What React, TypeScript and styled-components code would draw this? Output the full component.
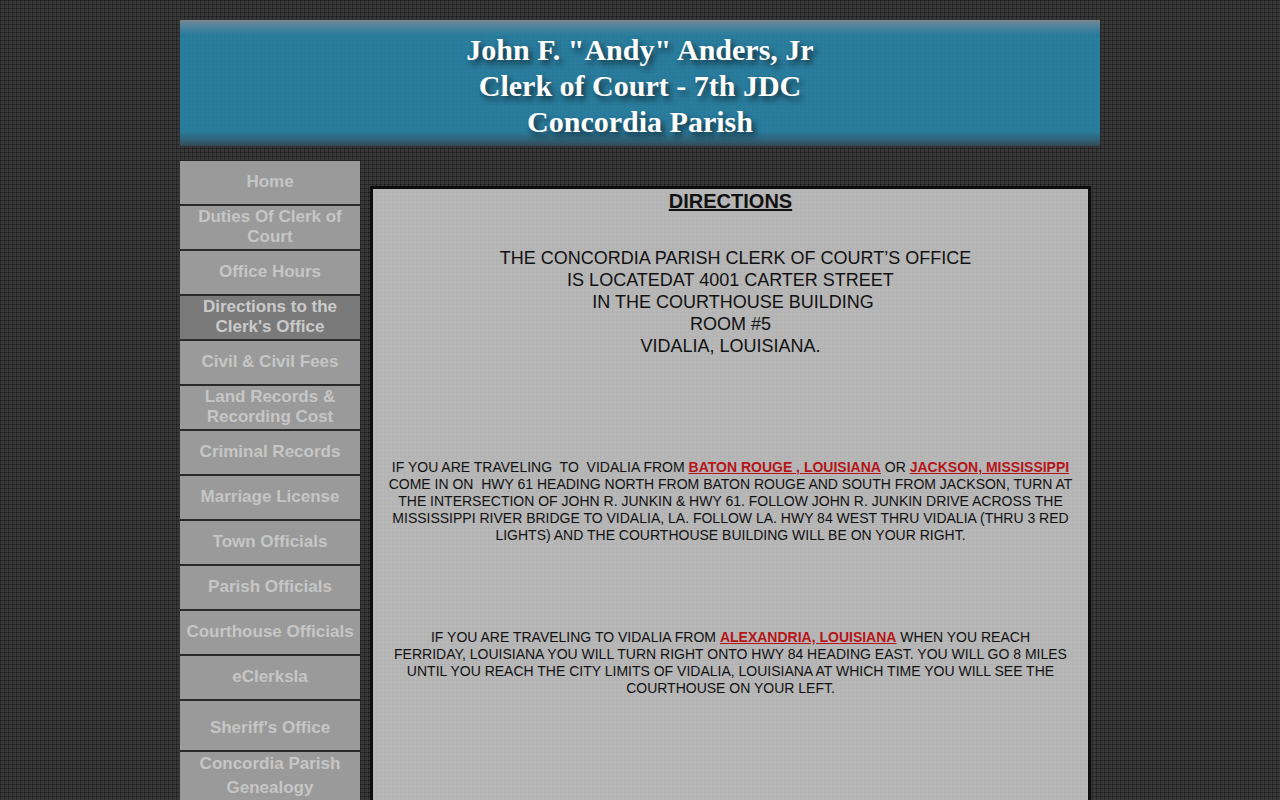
import React from "react";
import styled, { createGlobalStyle } from "styled-components";

const GlobalStyle = createGlobalStyle`
  html {
    scrollbar-width: none;
  }
  body {
    margin: 0;
    background-color: #383838;
    background-image:
      linear-gradient(to right, rgba(0, 0, 0, 0.28) 1px, transparent 1px),
      linear-gradient(to bottom, rgba(0, 0, 0, 0.28) 1px, transparent 1px);
    background-size: 4px 4px;
    font-family: "Liberation Sans", Arial, sans-serif;
  }
`;

const Page = styled.div`
  max-width: 920px;
  margin: 0 auto;
  padding: 20px 0;
`;

const Banner = styled.header`
  padding: 12px 0 6px;
  background-color: rgba(41, 135, 173, 0.87);
  background-image: linear-gradient(
    to bottom,
    rgba(140, 140, 140, 0.8) 0,
    rgba(120, 140, 160, 0.5) 6px,
    transparent 15px,
    transparent calc(100% - 15px),
    rgba(55, 60, 65, 0.35) calc(100% - 7px),
    rgba(55, 60, 65, 0.8) 100%
  );
`;

const BannerTitle = styled.h1`
  margin: 0;
  color: #fff;
  font: bold 30px/36px "Liberation Serif", "Times New Roman", serif;
  text-align: center;
  text-shadow: 3px 4px 6px rgba(0, 0, 0, 0.65);
`;

const Columns = styled.div`
  display: flex;
  align-items: flex-start;
  gap: 10px;
  margin-top: 15px;
`;

const Menu = styled.nav`
  display: flex;
  flex-direction: column;
  flex: 0 0 180px;
  gap: 2px;
  background: rgba(40, 40, 40, 0.8);
`;

const MenuLink = styled.a<{ $current?: boolean; $size: "normal" | "tall" | "double" }>`
  display: flex;
  align-items: center;
  justify-content: center;
  box-sizing: border-box;
  min-height: ${(p) => (p.$size === "normal" ? 43 : 49)}px;
  padding: ${(p) => (p.$size === "tall" ? "4px 5px 0" : "0 5px 2px")};
  background: ${(p) => (p.$current ? "rgba(136, 136, 136, 0.85)" : "rgba(174, 174, 174, 0.85)")};
  color: ${(p) => (p.$current ? "#cacaca" : "#c6c6c6")};
  font-size: 17px;
  font-weight: bold;
  line-height: ${(p) => (p.$size === "normal" ? 20 : 24)}px;
  text-align: center;
  text-decoration: none;
`;

const Content = styled.main`
  flex: 1;
  min-width: 0;
  min-height: 700px;
  margin: 25px 9px 0 0;
  padding: 0 15px;
  border: 3px solid #0e0e0e;
  background: rgba(204, 204, 204, 0.86);
  color: #111;
  text-align: center;
`;

const Heading = styled.h2`
  margin: 0;
  font-size: 20px;
  line-height: 24px;
  text-decoration: underline;
`;

const Address = styled.p`
  margin: 34px 0 0;
  font-size: 18px;
  line-height: 22px;
`;

const Route = styled.p<{ $first?: boolean }>`
  margin: ${(p) => (p.$first ? 102 : 85)}px 0 0;
  font-size: 14px;
  line-height: 17px;
`;

const Place = styled.strong`
  color: #b71418;
  text-decoration: underline;
`;

const links: { label: string; current?: boolean; size?: "tall" | "double" }[] = [
  { label: "Home" },
  { label: "Duties Of Clerk of Court" },
  { label: "Office Hours" },
  { label: "Directions to the Clerk's Office", current: true },
  { label: "Civil & Civil Fees" },
  { label: "Land Records & Recording Cost" },
  { label: "Criminal Records" },
  { label: "Marriage License" },
  { label: "Town Officials" },
  { label: "Parish Officials" },
  { label: "Courthouse Officials" },
  { label: "eClerksla" },
  { label: "Sheriff's Office", size: "tall" },
  { label: "Concordia Parish Genealogy", size: "double" },
];

export default function App() {
  return (
    <>
      <GlobalStyle />
      <Page>
        <Banner>
          <BannerTitle>
            John F. "Andy" Anders, Jr
            <br />
            Clerk of Court - 7th JDC
            <br />
            Concordia Parish
          </BannerTitle>
        </Banner>
        <Columns>
          <Menu aria-label="Main">
            {links.map((l) => (
              <MenuLink
                key={l.label}
                href="#"
                $current={l.current}
                $size={l.size ?? "normal"}
                aria-current={l.current ? "page" : undefined}
              >
                {l.label}
              </MenuLink>
            ))}
          </Menu>
          <Content>
            <Heading>DIRECTIONS</Heading>
            <Address>
              &nbsp;&nbsp;THE CONCORDIA PARISH CLERK OF COURT’S OFFICE
              <br />
              IS LOCATEDAT 4001 CARTER STREET
              <br />
              &nbsp;IN THE COURTHOUSE BUILDING
              <br />
              ROOM #5
              <br />
              VIDALIA, LOUISIANA.
            </Address>
            <Route $first>
              IF YOU ARE TRAVELING&nbsp; TO&nbsp; VIDALIA FROM <Place>BATON ROUGE , LOUISIANA</Place> OR{" "}
              <Place>JACKSON, MISSISSIPPI</Place> COME IN ON&nbsp; HWY 61 HEADING NORTH FROM BATON ROUGE
              AND SOUTH FROM JACKSON, TURN AT THE INTERSECTION OF JOHN R. JUNKIN &amp; HWY 61. FOLLOW
              JOHN R. JUNKIN DRIVE ACROSS THE MISSISSIPPI RIVER BRIDGE TO VIDALIA, LA. FOLLOW LA. HWY 84
              WEST THRU VIDALIA (THRU 3 RED LIGHTS) AND THE COURTHOUSE BUILDING WILL BE ON YOUR RIGHT.
            </Route>
            <Route>
              IF YOU ARE TRAVELING TO VIDALIA FROM <Place>ALEXANDRIA, LOUISIANA</Place> WHEN YOU REACH
              <br />
              FERRIDAY, LOUISIANA YOU WILL TURN RIGHT ONTO HWY 84 HEADING EAST. YOU WILL GO 8 MILES UNTIL
              YOU REACH THE CITY LIMITS OF VIDALIA, LOUISIANA AT WHICH TIME YOU WILL SEE THE COURTHOUSE
              ON YOUR LEFT.
            </Route>
          </Content>
        </Columns>
      </Page>
    </>
  );
}
